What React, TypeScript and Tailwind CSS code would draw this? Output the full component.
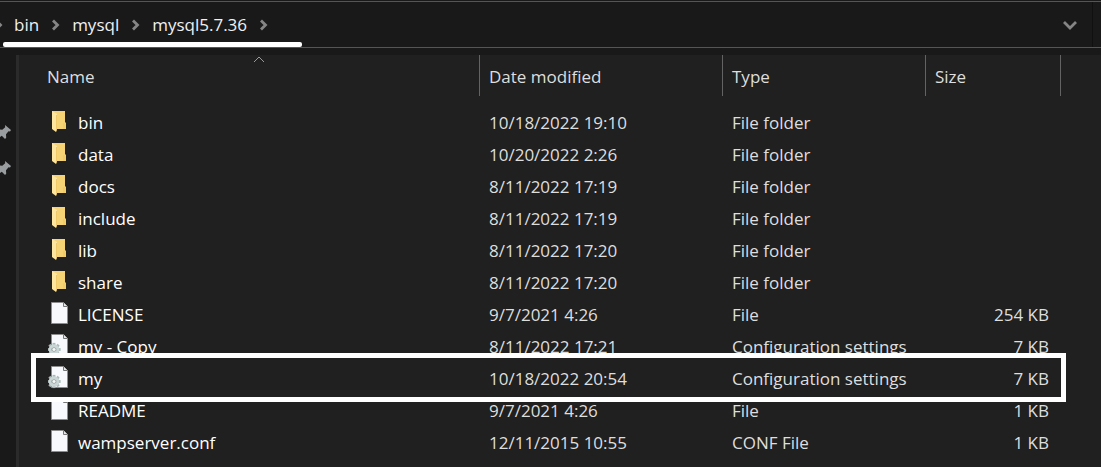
import { FC } from "react";
import { twJoin } from "tailwind-merge";

type EntryKind = "folder" | "file" | "settings";

type Entry = {
    name: string;
    modified: string;
    type: string;
    size?: string;
    kind: EntryKind;
    isHighlighted?: boolean;
};

const PATH = ["bin", "mysql", "mysql5.7.36"];

const ENTRIES: Entry[] = [
    { name: "bin", modified: "10/18/2022 19:10", type: "File folder", kind: "folder" },
    { name: "data", modified: "10/20/2022 2:26", type: "File folder", kind: "folder" },
    { name: "docs", modified: "8/11/2022 17:19", type: "File folder", kind: "folder" },
    { name: "include", modified: "8/11/2022 17:19", type: "File folder", kind: "folder" },
    { name: "lib", modified: "8/11/2022 17:20", type: "File folder", kind: "folder" },
    { name: "share", modified: "8/11/2022 17:20", type: "File folder", kind: "folder" },
    { name: "LICENSE", modified: "9/7/2021 4:26", type: "File", size: "254 KB", kind: "file" },
    {
        name: "my - Copy",
        modified: "8/11/2022 17:21",
        type: "Configuration settings",
        size: "7 KB",
        kind: "settings",
    },
    {
        name: "my",
        modified: "10/18/2022 20:54",
        type: "Configuration settings",
        size: "7 KB",
        kind: "settings",
        isHighlighted: true,
    },
    { name: "README", modified: "9/7/2021 4:26", type: "File", size: "1 KB", kind: "file" },
    { name: "wampserver.conf", modified: "12/11/2015 10:55", type: "CONF File", size: "1 KB", kind: "file" },
];

const GEAR_TEETH = [0, 45, 90, 135, 180, 225, 270, 315];

const EntryIcon: FC<{ kind: EntryKind }> = ({ kind }) => {
    if (kind == "folder") {
        return (
            <svg className="shrink-0" width="20" height="24" viewBox="0 0 20 24" aria-hidden>
                <path d="M4 1h13v11l1 1v6H4z" fill="#f6d375" />
                <path d="M15 13h3v6h-3z" fill="#f2cc66" />
                <path d="M4 1l5 3v15l-1 3-4-3z" fill="#ffe6a0" />
                <path d="M8 5h1v14l-1 3z" fill="#f0ca68" />
            </svg>
        );
    }

    return (
        <svg className="shrink-0" width="20" height="24" viewBox="0 0 20 24" aria-hidden>
            <path d="M3.5 .5h12l4 4v17h-16z" fill="#f7f9fc" stroke="#8d8d8d" />
            <path d="M15.5 .5v4h4" fill="#e4e6e8" stroke="#777" />
            {kind == "settings" && (
                <g transform="translate(6 15.5)">
                    {GEAR_TEETH.map((angle) => (
                        <rect
                            key={angle}
                            x="-1.4"
                            y="-6.6"
                            width="2.8"
                            height="4"
                            fill="#a9b7b6"
                            transform={`rotate(${angle})`}
                        />
                    ))}
                    <circle r="3.9" fill="none" stroke="#c9d6d5" strokeWidth="2.8" />
                    <circle r="2" fill="#f4f7f7" stroke="#8c9998" strokeWidth=".8" />
                </g>
            )}
        </svg>
    );
};

const PathChevron: FC = () => (
    <svg width="9" height="12" viewBox="0 0 9 12" aria-hidden>
        <path d="M2 1.5L6.5 6L2 10.5" fill="none" stroke="#858585" strokeWidth="2.8" />
    </svg>
);

const Pin: FC = () => (
    <svg width="11" height="15" viewBox="0 0 11 15" aria-hidden>
        <path
            d="M5 0l6 5-1 1.5-1.5-.2-2.5 3 .2 3.5L5 14 1.8 10.8 0 12V4.6l2.3.2L5.2 2.2z"
            fill="#9a9da0"
        />
    </svg>
);

const AddressBar: FC = () => (
    <header className="mt-px flex h-[47px] border-y border-[#555] bg-[#191919]">
        <nav aria-label="Path" className="relative flex grow items-center overflow-hidden">
            <span className="-ml-1.5 mr-[11px] flex">
                <PathChevron />
            </span>
            {PATH.map((folder) => (
                <span key={folder} className="flex items-center">
                    <a href="#" className="text-[#f0f0f0]">
                        {folder}
                    </a>
                    <span className="mx-3 flex">
                        <PathChevron />
                    </span>
                </span>
            ))}
            <span className="absolute bottom-0 left-[3px] h-[5px] w-[299px] rounded-xs bg-white" />
        </nav>
        <button
            type="button"
            aria-label="Previous locations"
            className="flex w-[46px] items-center justify-center border-r border-[#101010]"
        >
            <svg width="16" height="12" viewBox="0 0 16 12" aria-hidden>
                <path d="M2 3L8 9L14 3" fill="none" stroke="#858585" strokeWidth="2.8" />
            </svg>
        </button>
        <span className="w-2" />
    </header>
);

const HEADING = "flex h-[41px] w-full items-center border-r border-[#636363] pt-0.5 text-left";

const FileTable: FC = () => (
    <table className="w-full table-fixed border-collapse">
        <colgroup>
            <col />
            <col className="w-[243px]" />
            <col className="w-[203px]" />
            <col className="w-[135px]" />
            <col className="w-10" />
        </colgroup>
        <thead>
            <tr className="h-[51px] align-top text-[#dedede]">
                <th className="p-0 pl-[19px] font-normal" aria-sort="ascending">
                    <button type="button" className={twJoin(HEADING, "relative pl-[9px]")}>
                        Name
                        <svg
                            className="absolute left-1/2 top-0 -translate-x-1/2"
                            width="12"
                            height="8"
                            viewBox="0 0 12 8"
                            aria-hidden
                        >
                            <path d="M1 7L6 2L11 7" fill="none" stroke="#9a9a9a" />
                        </svg>
                    </button>
                </th>
                {["Date modified", "Type", "Size"].map((title) => (
                    <th key={title} className="p-0 font-normal">
                        <button type="button" className={twJoin(HEADING, "pl-[9px]")}>
                            {title}
                        </button>
                    </th>
                ))}
                <td />
            </tr>
        </thead>
        <tbody>
            {ENTRIES.map((entry) => (
                <tr
                    key={entry.name}
                    className={twJoin(
                        "h-8 whitespace-nowrap text-[#dedede]",
                        entry.isHighlighted && "relative z-10"
                    )}
                >
                    <td className="p-0 pl-[29px] text-white">
                        <span className="flex items-center gap-2.5">
                            <EntryIcon kind={entry.kind} />
                            <span className="pt-0.5">{entry.name}</span>
                        </span>
                        {entry.isHighlighted && (
                            <span className="absolute -bottom-2 -top-[9px] left-3 right-[35px] border-5 border-white" />
                        )}
                    </td>
                    <td className="p-0 pl-[9px] pt-0.5">{entry.modified}</td>
                    <td className="p-0 pl-[9px] pt-0.5">{entry.type}</td>
                    <td className="p-0 pr-3 pt-0.5 text-right">{entry.size}</td>
                    <td />
                </tr>
            ))}
        </tbody>
    </table>
);

const App: FC = () => (
    <div className="flex min-h-screen flex-col bg-[#191919] font-['Open_Sans',sans-serif] text-[17px] leading-6">
        <AddressBar />
        <div className="mt-[7px] flex grow">
            <aside className="flex w-4 shrink-0 flex-col gap-[21px] pt-[70px]">
                <Pin />
                <Pin />
            </aside>
            <main className="min-w-0 grow border-l-3 border-[#2b2b2b] bg-[#202020]">
                <FileTable />
            </main>
        </div>
    </div>
);

export default App;
